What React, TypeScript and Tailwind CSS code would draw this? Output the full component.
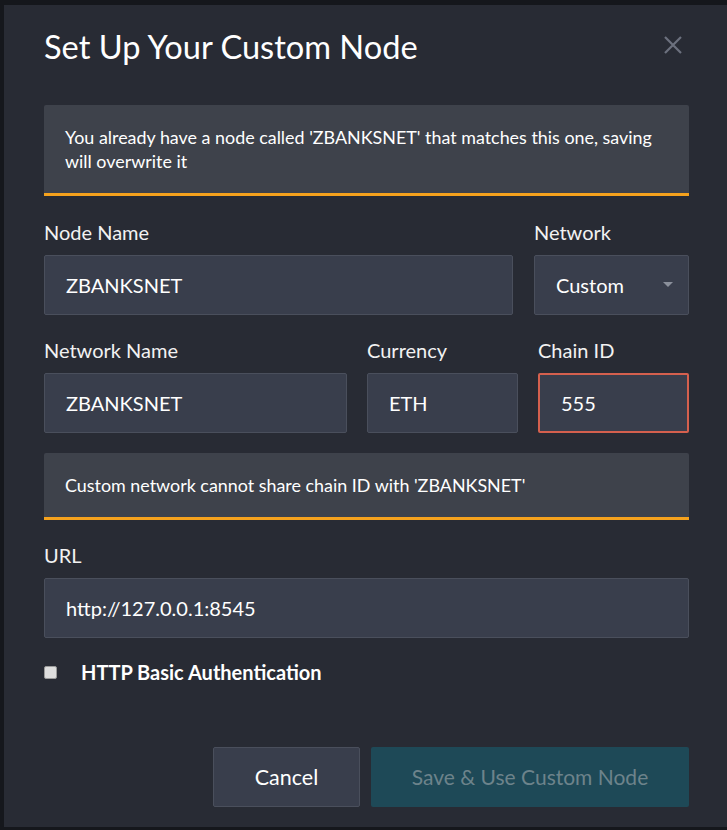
import React from "react";

const font = { fontFamily: "Lato, 'Open Sans', sans-serif" };

function Field({ label, value, className = "", inputClass = "" }: { label: string; value: string; className?: string; inputClass?: string }) {
  return (
    <div className={`flex flex-col ${className}`}>
      <div className="text-[20px] leading-[24px] text-[#f2f2f2] mb-[11px]">{label}</div>
      <div className={`h-[60px] rounded-[2px] bg-[#393e4c] flex items-center pl-[21px] text-[20px] text-white ${inputClass}`}>
        {value}
      </div>
    </div>
  );
}

function Alert({ children }: { children: React.ReactNode }) {
  return (
    <div className="bg-[#3e424b] border-b-[3px] border-[#f5a21d] rounded-t-[2px] px-[21px] py-[20px] text-[17.9px] leading-[24px] text-white">
      {children}
    </div>
  );
}

export default function App() {
  return (
    <div className="w-[727px] h-[830px] overflow-hidden bg-[#15171c] relative" style={font}>
      <div className="ml-[4px] mt-[5px] w-[725px] h-[822px] bg-[#282b34] px-[40px] pt-[24px] flex flex-col">
        <div className="flex items-center justify-between">
          <h1 className="text-[32.6px] leading-[36px] text-white font-normal">Set Up Your Custom Node</h1>
          <svg width="20" height="20" viewBox="0 0 20 20" className="mr-[6px] mt-[-4px]">
            <path d="M2 2 L18 18 M18 2 L2 18" stroke="#6c717e" strokeWidth="2.2" />
          </svg>
        </div>

        <div className="mt-[40px]">
          <Alert>
            You already have a node called 'ZBANKSNET' that matches this one, saving will overwrite it
          </Alert>
        </div>

        <div className="flex gap-[21px] mt-[24px]">
          <Field label="Node Name" value="ZBANKSNET" className="w-[469px]" inputClass="border border-[#4a4f5c]" />
          <div className="flex flex-col w-[155px]">
            <div className="text-[20px] leading-[24px] text-[#f2f2f2] mb-[11px]">Network</div>
            <div className="h-[60px] rounded-[2px] bg-[#393e4c] border border-[#4a4f5c] flex items-center justify-between pl-[21px] pr-[15px] text-[20px] text-white">
              <span>Custom</span>
              <svg width="10" height="6" viewBox="0 0 10 6">
                <path d="M0 0 L10 0 L5 5 Z" fill="#8b909b" />
              </svg>
            </div>
          </div>
        </div>

        <div className="flex gap-[20px] mt-[23px]">
          <Field label="Network Name" value="ZBANKSNET" className="w-[303px]" inputClass="border border-[#4a4f5c]" />
          <Field label="Currency" value="ETH" className="w-[151px]" inputClass="border border-[#4a4f5c]" />
          <Field label="Chain ID" value="555" className="w-[151px]" inputClass="border-2 border-[#d5604e]" />
        </div>

        <div className="mt-[20px]">
          <Alert>Custom network cannot share chain ID with 'ZBANKSNET'</Alert>
        </div>

        <div className="mt-[23px]">
          <Field label="URL" value="http://127.0.0.1:8545" inputClass="border border-[#4a4f5c]" />
        </div>

        <div className="flex items-center mt-[22px] h-[24px]">
          <div className="w-[13px] h-[13px] rounded-[2px] bg-[#dedede] border border-[#9a9a9a]" />
          <span className="ml-[24px] text-[20px] font-bold text-white">HTTP Basic Authentication</span>
        </div>

        <div className="flex-1" />
        <div className="flex justify-end gap-[11px] mb-[20px]">
          <button className="w-[147px] h-[60px] rounded-[2px] bg-[#393e4c] border border-[#4a4f5c] text-[21.5px] text-white">Cancel</button>
          <button className="w-[318px] h-[60px] rounded-[2px] bg-[#1e4957] text-[21px] text-[#6d838b]">Save &amp; Use Custom Node</button>
        </div>
      </div>
      <div className="absolute left-[38px] top-[823px] text-[16px] text-[#9aa0aa]">1000000 ETH</div>
    </div>
  );
}
